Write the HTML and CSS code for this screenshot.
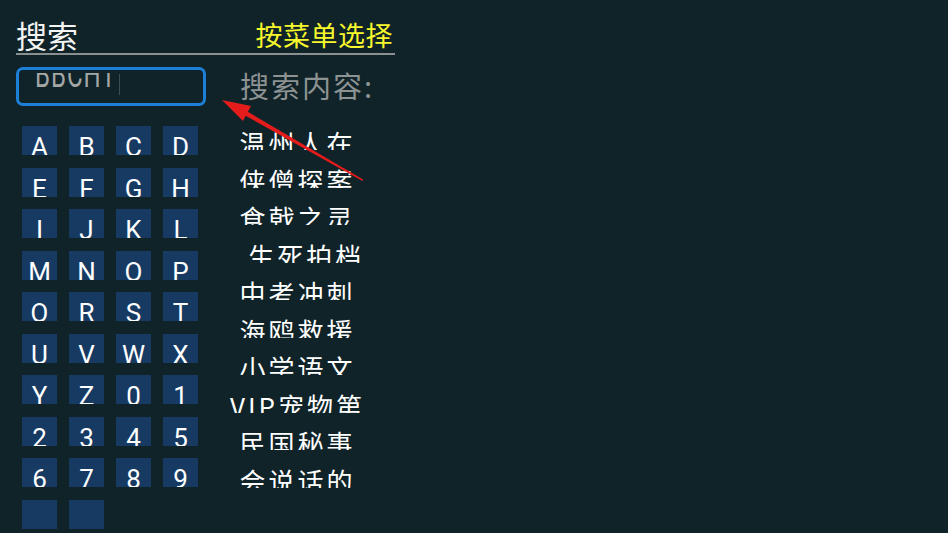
FILE: index.html
```html
<!DOCTYPE html>
<html lang="zh-CN">
<head>
	<meta charset="UTF-8">
	<title>搜索</title>
	<link rel="stylesheet" href="styles.css">
</head>
<body>

	<div class="screen">
		<div class="header">
			<span class="title">搜索</span>
			<span class="hint">按菜单选择</span>
		</div>

		<div class="content">
			<div class="left">
				<div class="search-box">
					<div class="typed"><span>BBCHT</span></div>
					<i class="cursor"></i>
				</div>

				<div class="keypad">
					<span class="key">A</span><span class="key">B</span><span class="key">C</span><span class="key">D</span>
					<span class="key">E</span><span class="key">F</span><span class="key">G</span><span class="key">H</span>
					<span class="key">I</span><span class="key">J</span><span class="key">K</span><span class="key">L</span>
					<span class="key">M</span><span class="key">N</span><span class="key">O</span><span class="key">P</span>
					<span class="key">Q</span><span class="key">R</span><span class="key">S</span><span class="key">T</span>
					<span class="key">U</span><span class="key">V</span><span class="key">W</span><span class="key">X</span>
					<span class="key">Y</span><span class="key">Z</span><span class="key">0</span><span class="key">1</span>
					<span class="key">2</span><span class="key">3</span><span class="key">4</span><span class="key">5</span>
					<span class="key">6</span><span class="key">7</span><span class="key">8</span><span class="key">9</span>
					<span class="key"></span><span class="key"></span>
				</div>
			</div>

			<div class="right">
				<div class="label">搜索内容:</div>
				<ul class="results">
					<li>温州人在</li>
					<li>侠僧探案</li>
					<li>食戟之灵</li>
					<li>&nbsp;&nbsp;生死拍档</li>
					<li>中考冲刺</li>
					<li>海鸥救援</li>
					<li>小学语文</li>
					<li>VIP宠物第</li>
					<li>民国秘事</li>
					<li>会说话的</li>
				</ul>
			</div>
		</div>
	</div>

	<!-- 红色箭头标注 -->
	<svg class="arrow" width="948" height="533" viewBox="0 0 948 533">
		<polygon points="222,100 251,106 243,121" fill="#e41c1c"/>
		<polygon points="244,109.5 246,116 362.5,181 363,179.5" fill="#e41c1c"/>
	</svg>

</body>
</html>
```

FILE: styles.css
```css
*{
	margin: 0;
	padding: 0;
}
html,body{
	width: 948px;
	height: 533px;
	overflow: hidden;
	background: #0f2328;
}
body{
	position: relative;
	font-family: "Noto Sans CJK SC", "Noto Sans", sans-serif;
	color: #fff;
}
.screen{
	padding-left: 16px;
}
.header{
	width: 377px;
	height: 53px;
	padding-right: 2px;
	display: flex;
	justify-content: space-between;
	align-items: flex-end;
	border-bottom: 2px solid #8a8f8f;
}
.title{
	font-size: 31px;
	line-height: 31px;
	padding-bottom: 3px;
	color: #f4f4f4;
}
.hint{
	font-size: 27px;
	line-height: 27px;
	padding-bottom: 5px;
	letter-spacing: 0.5px;
	color: #f7f72c;
}
.content{
	display: flex;
	margin-top: 12px;
}
.left{
	width: 190px;
}
.search-box{
	height: 33px;
	border: 3px solid #1c80d8;
	border-radius: 7px;
	display: flex;
	align-items: flex-start;
	padding-left: 16px;
}
.typed{
	margin-top: 3px;
	height: 14px;
	overflow: hidden;
	font-family: Roboto, "Liberation Sans", sans-serif;
	font-size: 24px;
	line-height: 12px;
	letter-spacing: 1px;
	color: #a3a7a7;
}
.typed span{
	display: inline-block;
	transform: scaleY(1.5);
	transform-origin: 0 14px;
}
.cursor{
	display: block;
	width: 1px;
	height: 21px;
	margin: 4px 0 0 2px;
	background: #3f4c50;
}
.keypad{
	display: grid;
	grid-template-columns: repeat(4, 35px);
	grid-auto-rows: 29px;
	column-gap: 12px;
	row-gap: 12.5px;
	margin: 20px 0 0 6px;
}
.key{
	display: block;
	height: 29px;
	overflow: hidden;
	box-sizing: border-box;
	padding-top: 7px;
	background: #173a62;
	text-align: center;
	font-family: Roboto, "Liberation Sans", sans-serif;
	font-size: 26px;
	line-height: 29px;
	color: #fff;
}
.right{
	width: 183px;
}
.label{
	margin-top: 4px;
	padding-left: 34px;
	font-size: 29px;
	line-height: 29px;
	letter-spacing: 2px;
	color: #8d9292;
}
.results{
	list-style: none;
	margin-top: 28px;
	display: flex;
	flex-direction: column;
	gap: 15.5px;
}
.results li{
	height: 22px;
	overflow: hidden;
	text-align: center;
	font-size: 26px;
	line-height: 30px;
	letter-spacing: 3px;
	white-space: pre;
	color: #fff;
}
.arrow{
	position: absolute;
	left: 0;
	top: 0;
	pointer-events: none;
}
```
